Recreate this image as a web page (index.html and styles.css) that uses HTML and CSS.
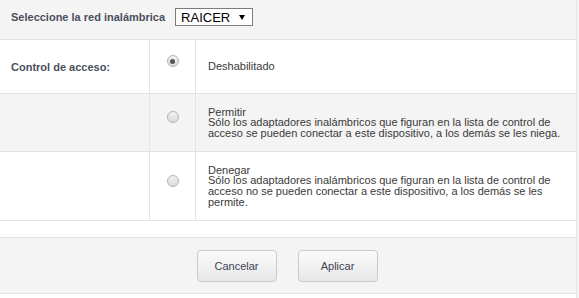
FILE: index.html
```html
<!DOCTYPE html>
<html lang="es">

<head>
    <meta charset="UTF-8">
    <title>Control de acceso</title>
    <link rel="stylesheet" href="styles.css">
</head>

<body>
    <div class="page">
        <!-- Red -->
        <div class="top">
            <span class="lbl">Seleccione la red inalámbrica</span>
            <div class="sel"><span>RAICER</span><i class="arrow"></i></div>
        </div>

        <!-- Tabla de opciones -->
        <div class="row row--first">
            <div class="cell name">Control de acceso:</div>
            <div class="cell pick"><span class="radio radio--on"></span></div>
            <div class="cell desc">Deshabilitado</div>
        </div>
        <div class="row row--alt">
            <div class="cell name"></div>
            <div class="cell pick"><span class="radio"></span></div>
            <div class="cell desc">Permitir<br>Sólo los adaptadores inalámbricos que figuran en la lista de control de acceso se pueden conectar a este dispositivo, a los demás se les niega.</div>
        </div>
        <div class="row row--last">
            <div class="cell name"></div>
            <div class="cell pick"><span class="radio"></span></div>
            <div class="cell desc">Denegar<br>Sólo los adaptadores inalámbricos que figuran en la lista de control de acceso no se pueden conectar a este dispositivo, a los demás se les permite.</div>
        </div>

        <!-- Botones -->
        <div class="footer">
            <button class="btn">Cancelar</button>
            <button class="btn">Aplicar</button>
        </div>
    </div>
</body>

</html>
```

FILE: styles.css
```css
* {
    margin: 0;
    padding: 0;
    box-sizing: border-box;
}

body {
    background-color: #f4f4f4;
    font-family: "Liberation Sans", Arial, sans-serif;
    font-size: 11px;
    color: #3a3a3a;
}

.page {
    width: 577px;
    height: 298px;
    background-color: #fff;
    border-right: 1px solid #e3e3e3;
}

/* Header */
.top {
    height: 40px;
    display: flex;
    align-items: center;
    gap: 10px;
    padding: 0 0 5px 11px;
    background-color: #f4f4f4;
    border-bottom: 1px solid #e3e3e3;
}

.lbl,
.name {
    font-weight: bold;
    color: #4a4f5c;
}

.sel {
    width: 78px;
    height: 18px;
    display: flex;
    align-items: center;
    justify-content: space-between;
    padding: 0 7px 0 5px;
    border: 1px solid #7c7c7c;
    background-color: #fff;
    font-size: 13px;
    color: #000;
}

.arrow {
    width: 0;
    height: 0;
    border-left: 3px solid transparent;
    border-right: 3px solid transparent;
    border-top: 5px solid #000;
}

/* Filas */
.row {
    display: grid;
    grid-template-columns: 150px 46px 1fr;
    border-bottom: 1px solid #e3e3e3;
}

.row--first {
    height: 54px;
}

.row--alt {
    height: 58px;
    background-color: #f4f4f4;
}

.row--last {
    height: 69px;
}

.cell {
    display: flex;
    align-items: center;
}

.name,
.pick {
    border-right: 1px solid #e3e3e3;
}

.name {
    padding-left: 11px;
}

.pick {
    justify-content: center;
}

.desc {
    padding: 0 12px;
    line-height: 10.6px;
    color: #3a3a3a;
}

.radio {
    width: 12px;
    height: 12px;
    margin-bottom: 11px;
    border-radius: 50%;
    border: 1px solid #b3b3b3;
    background: linear-gradient(#f3f3f3, #d9d9d9);
    display: flex;
    align-items: center;
    justify-content: center;
}

.radio--on::after {
    content: "";
    width: 5px;
    height: 5px;
    border-radius: 50%;
    background-color: #555;
}

/* Pie */
.footer {
    margin-top: 16px;
    height: 57px;
    display: flex;
    justify-content: center;
    gap: 21px;
    padding: 12px 2px 0 0;
    background-color: #f4f4f4;
    border-top: 1px solid #e3e3e3;
    border-bottom: 1px solid #e3e3e3;
}

.btn {
    width: 80px;
    height: 32px;
    border: 1px solid #c9c9c9;
    border-radius: 4px;
    background: linear-gradient(#fbfbfb, #e7e7e7);
    font-family: "Liberation Sans", Arial, sans-serif;
    font-size: 11px;
    color: #3c4457;
    cursor: pointer;
}
```
